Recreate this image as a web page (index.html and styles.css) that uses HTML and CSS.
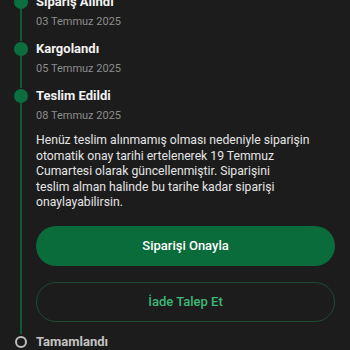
FILE: index.html
```html
<!DOCTYPE html>
<html lang="tr">
<head>
<meta charset="utf-8">
<link rel="stylesheet" href="styles.css">
</head>
<body>
<div class="timeline">
  <div class="item done">
    <div class="rail"><span class="dot"></span><span class="line"></span></div>
    <div class="content">
      <div class="title">Sipariş Alındı</div>
      <div class="date">03 Temmuz 2025</div>
    </div>
  </div>
  <div class="item done">
    <div class="rail"><span class="dot"></span><span class="line"></span></div>
    <div class="content">
      <div class="title">Kargolandı</div>
      <div class="date">05 Temmuz 2025</div>
    </div>
  </div>
  <div class="item done current">
    <div class="rail"><span class="dot"></span><span class="line"></span></div>
    <div class="content">
      <div class="title">Teslim Edildi</div>
      <div class="date">08 Temmuz 2025</div>
      <p class="note">Henüz teslim alınmamış olması nedeniyle siparişin otomatik onay tarihi ertelenerek 19 Temmuz Cumartesi olarak güncellenmiştir. Siparişini <span class="nowrap">teslim alman</span> halinde bu tarihe kadar siparişi onaylayabilirsin.</p>
      <button class="btn primary">Siparişi Onayla</button>
      <button class="btn outline">İade Talep Et</button>
    </div>
  </div>
  <div class="item pending">
    <div class="rail"><span class="dot"></span></div>
    <div class="content">
      <div class="title">Tamamlandı</div>
    </div>
  </div>
</div>
</body>
</html>
```
FILE: styles.css
```css
html, body {
  margin: 0;
  padding: 0;
  background: #1c1c1c;
  font-family: Roboto, "Noto Sans", sans-serif;
  height: 100%;
  overflow: hidden;
}
.timeline {
  margin-top: -6px;
  padding: 0 15px 0 14px;
}
.item {
  display: flex;
  gap: 8px;
}
.rail {
  width: 14px;
  flex: none;
  display: flex;
  flex-direction: column;
  align-items: center;
}
.dot {
  width: 14px;
  height: 14px;
  border-radius: 50%;
  margin-top: 1px;
  background: #0b6e3e;
  flex: none;
}
.line {
  flex: 1;
  width: 2px;
  background: #0d5a34;
}
.content {
  flex: 1;
  padding-bottom: 11px;
  min-width: 0;
}
.title {
  font-size: 13px;
  line-height: 16px;
  font-weight: 700;
  color: #f2f2f2;
}
.date {
  margin-top: 4px;
  font-size: 11px;
  line-height: 16px;
  color: #8c8c8c;
}
.note {
  margin: 9px 0 0;
  padding-right: 10px;
  font-size: 12.2px;
  line-height: 15.5px;
  color: #e4e4e4;
}
.nowrap {
  white-space: nowrap;
}
.btn {
  display: flex;
  align-items: center;
  justify-content: center;
  width: 100%;
  height: 40px;
  border-radius: 20px;
  font-family: inherit;
  font-size: 13px;
  font-weight: 500;
  padding: 0;
}
.primary {
  margin-top: 15px;
  background: #0a6b3b;
  border: none;
  color: #ffffff;
}
.outline {
  margin-top: 16px;
  background: transparent;
  border: 1px solid #1d4a33;
  color: #3cb878;
}
.current .content {
  padding-bottom: 12px;
}
.pending .dot {
  width: 12px;
  height: 12px;
  background: transparent;
  border: 2px solid #bdbdbd;
  box-sizing: border-box;
  margin-top: 2px;
}
.pending .title {
  color: #c4c4c4;
}
```
